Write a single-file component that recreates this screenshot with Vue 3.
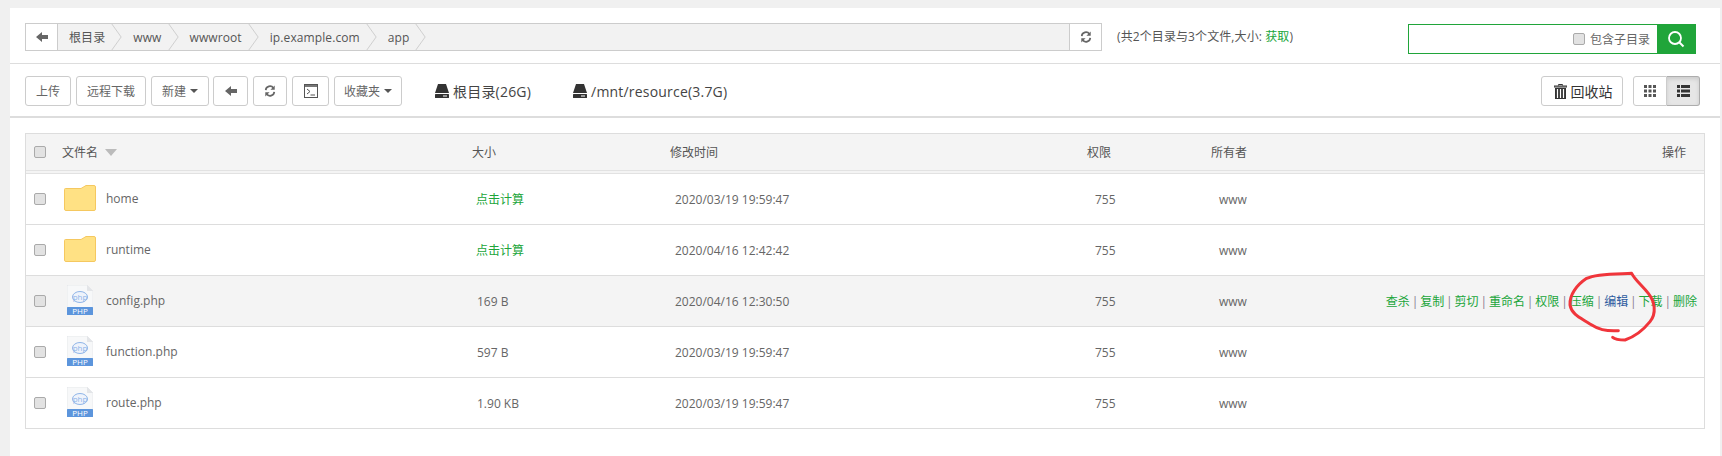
<script setup>
const crumbs = ['根目录', 'www', 'wwwroot', 'ip.example.com', 'app']
const rows = [
  { name: 'home', type: 'dir', size: '点击计算', time: '2020/03/19 19:59:47' },
  { name: 'runtime', type: 'dir', size: '点击计算', time: '2020/04/16 12:42:42' },
  { name: 'config.php', type: 'php', size: '169 B', time: '2020/04/16 12:30:50', hover: true },
  { name: 'function.php', type: 'php', size: '597 B', time: '2020/03/19 19:59:47' },
  { name: 'route.php', type: 'php', size: '1.90 KB', time: '2020/03/19 19:59:47' }
]
const actions = ['查杀', '复制', '剪切', '重命名', '权限', '压缩', '编辑', '下载', '删除']
</script>

<template>
  <div class="page">
    <div class="panel">
      <div class="top">
        <div class="crumbbar">
          <button class="crumb-back">
            <svg width="12" height="12" viewBox="0 0 12 12"><path d="M0 6 L6 1 V4 H12 V8 H6 V11 Z" fill="#666" /></svg>
          </button>
          <div class="crumbs">
            <template v-for="c in crumbs" :key="c">
              <span class="crumb">{{ c }}</span>
              <svg class="chev" width="11" height="28" viewBox="0 0 11 28"><path d="M0.5 0 L10.5 14 L0.5 28" fill="none" stroke="#ccc" /></svg>
            </template>
          </div>
          <button class="crumb-refresh">
            <svg width="12" height="12" viewBox="0 0 14 14"><path d="M2 6 A5 5 0 0 1 11 3.5 M12 8 A5 5 0 0 1 3 10.5" fill="none" stroke="#666" stroke-width="2" /><path d="M12.5 0.5 V5.5 H7.5 Z M1.5 13.5 V8.5 H6.5 Z" fill="#666" /></svg>
          </button>
        </div>
        <div class="stat">(共2个目录与3个文件,大小: <span class="green">获取</span>)</div>
        <div class="search">
          <div class="search-field">
            <span class="check"></span>
            <span class="search-label">包含子目录</span>
          </div>
          <button class="search-btn">
            <svg width="18" height="18" viewBox="0 0 18 18"><circle cx="8" cy="8" r="6" fill="none" stroke="#fff" stroke-width="1.8" /><path d="M12.5 12.5 L16.5 16.5" stroke="#fff" stroke-width="2" /></svg>
          </button>
        </div>
      </div>

      <div class="toolbar">
        <div class="tools">
          <button class="btn w46">上传</button>
          <button class="btn w70">远程下载</button>
          <button class="btn w58">新建<i class="caret"></i></button>
          <button class="btn w34 back">
            <svg width="12" height="12" viewBox="0 0 12 12"><path d="M0 6 L6 1 V4 H12 V8 H6 V11 Z" fill="#666" /></svg>
          </button>
          <button class="btn w34">
            <svg width="12" height="12" viewBox="0 0 14 14"><path d="M2 6 A5 5 0 0 1 11 3.5 M12 8 A5 5 0 0 1 3 10.5" fill="none" stroke="#666" stroke-width="2" /><path d="M12.5 0.5 V5.5 H7.5 Z M1.5 13.5 V8.5 H6.5 Z" fill="#666" /></svg>
          </button>
          <button class="btn w37">
            <svg width="14" height="14" viewBox="0 0 14 14"><rect x="0.5" y="0.5" width="13" height="13" fill="#fff" stroke="#555" /><rect x="1" y="1" width="12" height="2" fill="#777" /><path d="M3 5 L6 7.5 L3 10 M6.5 11 H11" fill="none" stroke="#555" /></svg>
          </button>
          <button class="btn w68">收藏夹<i class="caret"></i></button>
        </div>
        <div class="disks">
          <span class="disk">
            <svg class="hdd" width="14" height="14" viewBox="0 0 14 14"><path d="M3 0 H11 L14 9 H0 Z" fill="#333" /><rect x="0" y="10" width="14" height="4" rx="0.5" fill="#333" /><rect x="8" y="11.5" width="4" height="1" fill="#fff" /></svg>根目录(26G)
          </span>
          <span class="disk">
            <svg class="hdd" width="14" height="14" viewBox="0 0 14 14"><path d="M3 0 H11 L14 9 H0 Z" fill="#333" /><rect x="0" y="10" width="14" height="4" rx="0.5" fill="#333" /><rect x="8" y="11.5" width="4" height="1" fill="#fff" /></svg>/mnt/resource(3.7G)
          </span>
        </div>
        <div class="tool-right">
          <button class="btn recycle">
            <svg width="13" height="15" viewBox="0 0 13 15"><path d="M4.5 1.5 V0.5 H8.5 V1.5 M0 2 H13 V3 H0 Z" fill="none" stroke="#333" stroke-width="1" /><path d="M1 4 H12 V15 H1 Z" fill="#333" /><path d="M3.5 5 V14 M6.5 5 V14 M9.5 5 V14" stroke="#fff" stroke-width="1.2" /></svg>
            回收站
          </button>
          <div class="views">
            <button class="view">
              <svg width="12" height="12" viewBox="0 0 12 12" fill="#555"><path d="M0 0h3v3H0z M4.5 0h3v3h-3z M9 0h3v3H9z M0 4.5h3v3H0z M4.5 4.5h3v3h-3z M9 4.5h3v3H9z M0 9h3v3H0z M4.5 9h3v3h-3z M9 9h3v3H9z" /></svg>
            </button>
            <button class="view active">
              <svg width="13" height="12" viewBox="0 0 13 12" fill="#333"><path d="M0 0h3v3H0z M4 0h9v3H4z M0 4.5h3v3H0z M4 4.5h9v3H4z M0 9h3v3H0z M4 9h9v3H4z" /></svg>
            </button>
          </div>
        </div>
      </div>

      <div class="table">
        <div class="thead">
          <div class="namecell"><span class="check"></span><span class="th-name">文件名</span><i class="sort"></i></div>
          <div>大小</div>
          <div>修改时间</div>
          <div>权限</div>
          <div>所有者</div>
          <div class="op">操作</div>
        </div>
        <div v-for="r in rows" :key="r.name" class="row" :class="{ hover: r.hover }">
          <div class="namecell">
            <span class="check"></span>
            <span class="ficon" :class="r.type">
              <svg v-if="r.type === 'dir'" width="32" height="26" viewBox="0 0 32 26"><path d="M1.5 3.5 H17 L22 0.5 H30 A1.5 1.5 0 0 1 31.5 2 V24 A1.5 1.5 0 0 1 30 25.5 H2 A1.5 1.5 0 0 1 0.5 24 V4.5 A1 1 0 0 1 1.5 3.5 Z" fill="#ffe184" stroke="#f5c860" /></svg>
              <svg v-else width="26" height="30" viewBox="0 0 26 30"><path d="M1 0 H20 L26 6 V30 H0 V1 Z" fill="#f7f8f9" stroke="#e4e6ea" stroke-width="0.8" /><path d="M20 0 V6 H26 Z" fill="#e3e5e8" /><ellipse cx="13" cy="12" rx="7.5" ry="5.5" fill="#eef3fb" stroke="#8fb5e8" /><text x="13" y="14.5" text-anchor="middle" class="phpin">php</text><rect x="0" y="22" width="26" height="8" rx="0.5" fill="#5c95dc" /><text x="13" y="29" text-anchor="middle" class="phpband">PHP</text></svg>
            </span>
            <span class="fname">{{ r.name }}</span>
          </div>
          <div class="cell size" :class="{ green: r.type === 'dir' }">{{ r.size }}</div>
          <div class="cell time">{{ r.time }}</div>
          <div class="cell perm">755</div>
          <div class="cell owner">www</div>
          <div class="ops">
            <template v-if="r.hover">
              <template v-for="(a, i) in actions" :key="a">
                <span v-if="i" class="sep">|</span><span class="green" :class="{ edit: a === '编辑' }">{{ a }}</span>
              </template>
            </template>
          </div>
        </div>
      </div>
    </div>
    <svg class="scribble" width="362" height="100" viewBox="0 0 1086 300">
      <path d="M775 212 C735 214 715 208 690 192 C665 175 635 165 630 135 C628 105 650 75 680 55 C710 40 770 42 815 40 C825 60 845 75 865 100 C885 125 890 160 870 185 C850 210 825 230 795 240 C780 240 765 238 758 232" fill="none" stroke="#f0353b" stroke-width="9" stroke-linecap="round" stroke-linejoin="round" />
    </svg>
  </div>
</template>

<style>
body { margin: 0; background: #f0f0f0; }
</style>

<style scoped>
* { box-sizing: border-box; }
.page {
  position: relative;
  width: 1722px;
  height: 456px;
  padding: 8px 2px 0 10px;
  background: #f0f0f0;
  font-family: "Open Sans", "Noto Sans CJK SC", sans-serif;
  font-size: 12px;
  color: #666;
  overflow: hidden;
}
.panel { background: #fff; height: 448px; }
button { font-family: inherit; cursor: pointer; padding: 0; }
.green { color: #20a53a; }

.top {
  height: 56px;
  padding: 15px 23px 0 15px;
  display: flex;
  border-bottom: 1px solid #ddd;
}
.crumbbar {
  width: 1077px;
  height: 28px;
  display: flex;
  border: 1px solid #ccc;
  background: #f2f2f2;
}
.crumb-back {
  width: 32px;
  border: 0;
  border-right: 1px solid #ccc;
  background: #fff;
  display: flex;
  align-items: center;
  justify-content: center;
}
.crumbs { flex: 1; display: flex; align-items: center; color: #555; font-size: 12px; letter-spacing: 0.1px; }
.crumb { padding: 0 6px 0 11px; }
.chev { flex: none; height: 26px; }
.crumb-refresh {
  width: 32px;
  border: 0;
  border-left: 1px solid #ccc;
  background: #fff;
  display: flex;
  align-items: center;
  justify-content: center;
}
.stat { margin-left: 15px; line-height: 28px; font-size: 12px; letter-spacing: 0.1px; color: #555; width: 291px; white-space: nowrap; }
.search {
  width: 288px;
  height: 30px;
  margin-top: 1px;
  border: 1px solid #20a53a;
  display: flex;
}
.search-field {
  flex: 1;
  display: flex;
  align-items: center;
  justify-content: flex-end;
  padding-right: 7px;
  gap: 5px;
}
.search-label { color: #666; font-size: 12px; }
.search-btn {
  width: 38px;
  border: 0;
  background: #20a53a;
  display: flex;
  align-items: center;
  justify-content: center;
}

.check {
  display: block;
  flex: none;
  width: 12px;
  height: 12px;
  border: 1px solid #aaa;
  border-radius: 2px;
  background: #e2e2e2;
}

.toolbar {
  height: 54px;
  padding: 12px 20px 0 15px;
  display: flex;
  border-bottom: 2px solid #ddd;
}
.tools { display: flex; gap: 5px; height: 30px; }
.btn {
  height: 30px;
  border: 1px solid #ccc;
  border-radius: 3px;
  background: #fff;
  color: #666;
  font-size: 12px;
  display: flex;
  align-items: center;
  justify-content: center;
}
.w46 { width: 46px; }
.w70 { width: 70px; }
.w58 { width: 58px; }
.w34 { width: 34px; }
.w37 { width: 37px; }
.w68 { width: 68px; }
.back { margin-left: -1px; width: 35px; }
.caret {
  margin-left: 4px;
  border-top: 4px solid #555;
  border-left: 4px solid transparent;
  border-right: 4px solid transparent;
}
.disks { display: flex; height: 30px; align-items: center; margin-left: 33px; gap: 42px; font-size: 14px; letter-spacing: 0.2px; color: #444; }
.disk { display: flex; align-items: center; }
.hdd { margin-right: 4px; }
.tool-right { margin-left: auto; display: flex; gap: 10px; }
.recycle { width: 82px; color: #333; font-size: 14px; gap: 4px; padding-left: 2px; }
.views { display: flex; width: 67px; height: 30px; }
.view {
  flex: 1;
  border: 1px solid #ccc;
  background: #fff;
  border-radius: 3px 0 0 3px;
  display: flex;
  align-items: center;
  justify-content: center;
}
.view.active {
  border-color: #adadad;
  border-left: 0;
  border-radius: 0 3px 3px 0;
  background: #e6e6e6;
  box-shadow: inset 0 2px 4px rgba(0, 0, 0, 0.12);
}

.table {
  margin: 15px 15px 0 15px;
  border: 1px solid #ddd;
}
.thead {
  display: grid;
  grid-template-columns: 446px 198px 417px 124px 1fr 80px;
  align-items: center;
  height: 40px;
  background: #f4f4f4;
  border-bottom: 4px double #e2e2e2;
  color: #555;
}
.row {
  display: grid;
  grid-template-columns: 446px 198px 417px 124px 1fr;
  align-items: center;
  height: 51px;
  border-bottom: 1px solid #ddd;
}
.row:last-child { height: 50px; border-bottom: 0; }
.row.hover { background: #f4f4f4; }
.namecell { display: flex; align-items: center; padding-left: 8px; height: 100%; }
.th-name { margin-left: 16px; }
.sort {
  margin-left: 7px;
  border-top: 7px solid #bbb;
  border-left: 6px solid transparent;
  border-right: 6px solid transparent;
}
.ficon { width: 42px; margin-left: 18px; display: flex; align-items: center; }
.ficon.dir svg { margin-top: -3px; }
.ficon.php svg { margin-left: 3px; margin-top: -2px; }
.fname { color: #666; font-size: 12px; margin-top: -2px; }
.op { text-align: right; padding-right: 18px; }
.size { padding-left: 5px; }
.size.green { padding-left: 4px; }
.time { padding-left: 5px; }
.perm { padding-left: 8px; }
.owner { padding-left: 8px; }
.cell.green { color: #20a53a; }
.ops {
  position: absolute;
  right: 25px;
  display: flex;
  align-items: center;
  font-size: 12px;
}
.ops .edit { color: #2c5a9e; }
.sep { width: 10.4px; text-align: center; color: #8a7a8e; }
.scribble { position: absolute; left: 1360px; top: 260px; pointer-events: none; }
.phpin { font: 8px "Open Sans", sans-serif; fill: #8fb5e8; }
.phpband { font: 8px "Open Sans", sans-serif; fill: #fff; }
</style>
